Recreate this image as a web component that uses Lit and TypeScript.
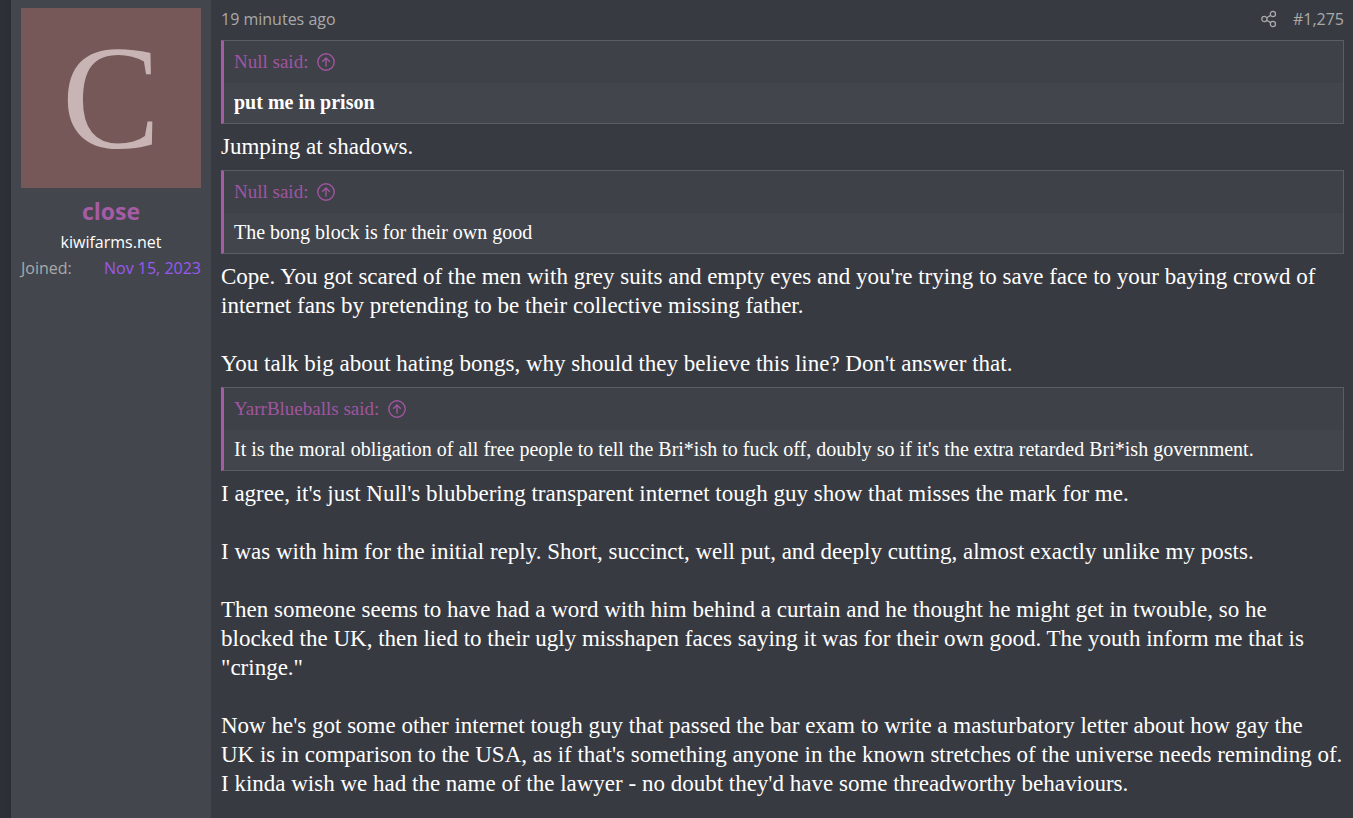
import { LitElement, html, css } from "lit";
import { customElement, property } from "lit/decorators.js";

@customElement("quote-block")
class QuoteBlock extends LitElement {
  @property() author = "";

  static styles = css`
    :host {
      display: block;
      margin: 9px 0 8px;
    }
    blockquote {
      margin: 0;
      border: 1px solid #5a5d64;
      border-left: 3px solid #a55ca5;
      background: #42464c;
      color: #fff;
      font-size: 20px;
      line-height: 24px;
    }
    .source {
      display: flex;
      align-items: center;
      gap: 9px;
      padding: 9px 10px;
      background: #3e4147;
      color: #a055a0;
      font-size: 19px;
      text-decoration: none;
    }
    .icon {
      width: 18px;
      height: 18px;
      fill: none;
      stroke: currentColor;
      stroke-width: 1.4;
    }
    .content {
      padding: 7px 10px 9px;
    }
  `;

  render() {
    return html`<blockquote>
      <a class="source" href="#">
        <span>${this.author} said:</span>
        <svg class="icon" viewBox="0 0 18 18" aria-hidden="true">
          <circle cx="9" cy="9" r="8.2" />
          <path d="M9 13.6V5M5.2 8.8 9 5l3.8 3.8" />
        </svg>
      </a>
      <div class="content"><slot></slot></div>
    </blockquote>`;
  }
}

@customElement("app-root")
class AppRoot extends LitElement {
  static styles = css`
    :host {
      display: block;
      min-height: 100vh;
      background: #2e3138;
      font-family: "Open Sans", sans-serif;
      font-size: 16px;
      line-height: 22px;
    }
    .post {
      display: flex;
      min-height: 100vh;
      box-sizing: border-box;
      padding-left: 11px;
      background: linear-gradient(to right, #2e3138, #2b2e32 11px);
    }
    .user {
      flex: none;
      width: 180px;
      padding: 8px 10px;
      background: #43474d;
      text-align: center;
    }
    .avatar {
      display: flex;
      align-items: center;
      justify-content: center;
      height: 180px;
      background: #755857;
      color: #c8b4b4;
      font-family: "Liberation Serif", serif;
      font-size: 148px;
      line-height: 180px;
      text-decoration: none;
    }
    .name {
      margin: 8px 0 4px;
      font-size: 23px;
      line-height: 31px;
    }
    .name a {
      color: #a55ca5;
      text-decoration: none;
    }
    .title {
      color: #fff;
    }
    dl {
      display: flex;
      justify-content: space-between;
      margin: 4px 0 0;
      color: #a9a9a9;
    }
    dd {
      margin: 0;
      color: #9a58f0;
    }
    .main {
      flex: 1;
      min-width: 0;
      padding: 8px 9px 8px 10px;
      background: #383a42;
    }
    header {
      display: flex;
      align-items: center;
      justify-content: space-between;
      padding-bottom: 1px;
    }
    header a {
      color: #a9a9a9;
      text-decoration: none;
    }
    .actions {
      display: flex;
      align-items: center;
      gap: 16px;
    }
    .share {
      display: flex;
      padding: 0;
      border: 0;
      background: none;
      color: #a9a9a9;
    }
    .share svg {
      width: 16px;
      height: 18px;
      fill: none;
      stroke: currentColor;
      stroke-width: 1.3;
    }
    .body {
      color: #fff;
      font-family: "Liberation Serif", serif;
      font-size: 23px;
      line-height: 29px;
    }
    p {
      margin: 0;
    }
    p + p {
      margin-top: 29px;
    }
  `;

  render() {
    return html`<article class="post">
      <section class="user">
        <a class="avatar" href="#">C</a>
        <h4 class="name"><a href="#">close</a></h4>
        <div class="title">kiwifarms.net</div>
        <dl><dt>Joined:</dt><dd>Nov 15, 2023</dd></dl>
      </section>
      <section class="main">
        <header>
          <a href="#"><time>19 minutes ago</time></a>
          <div class="actions">
            <button class="share" aria-label="Share">
              <svg viewBox="0 0 16 18" aria-hidden="true">
                <circle cx="3.4" cy="9" r="2.6" />
                <circle cx="11.9" cy="4" r="2.6" />
                <circle cx="11.9" cy="14" r="2.6" />
                <path d="M5.7 7.7 9.6 5.4M5.7 10.3l3.9 2.3" />
              </svg>
            </button>
            <a href="#">#1,275</a>
          </div>
        </header>
        <div class="body">
          <quote-block author="Null"><b>put me in prison</b></quote-block>
          <p>Jumping at shadows.</p>
          <quote-block author="Null">The bong block is for their own good</quote-block>
          <p>Cope. You got scared of the men with grey suits and empty eyes and you're trying to save face to your baying crowd of internet fans by pretending to be their collective missing father.</p>
          <p>You talk big about hating bongs, why should they believe this line? Don't answer that.</p>
          <quote-block author="YarrBlueballs">It is the moral obligation of all free people to tell the Bri*ish to fuck off, doubly so if it's the extra retarded Bri*ish government.</quote-block>
          <p>I agree, it's just Null's blubbering transparent internet tough guy show that misses the mark for me.</p>
          <p>I was with him for the initial reply. Short, succinct, well put, and deeply cutting, almost exactly unlike my posts.</p>
          <p>Then someone seems to have had a word with him behind a curtain and he thought he might get in twouble, so he<br />blocked the UK, then lied to their ugly misshapen faces saying it was for their own good. The youth inform me that is "cringe."</p>
          <p>Now he's got some other internet tough guy that passed the bar exam to write a masturbatory letter about how gay the<br />UK is in comparison to the USA, as if that's something anyone in the known stretches of the universe needs reminding of. I kinda wish we had the name of the lawyer - no doubt they'd have some threadworthy behaviours.</p>
        </div>
      </section>
    </article>`;
  }
}
